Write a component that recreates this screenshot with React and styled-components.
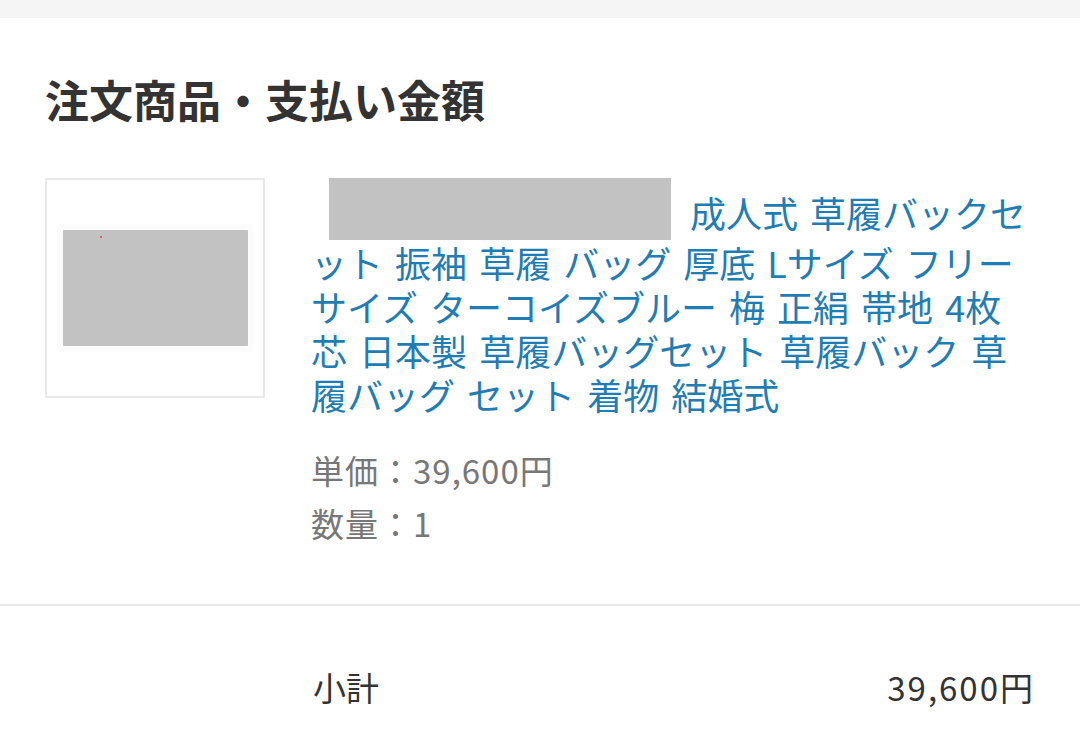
import React from "react";
import styled, { createGlobalStyle } from "styled-components";

const GlobalStyle = createGlobalStyle`
  html, body {
    margin: 0;
    padding: 0;
    background: #ffffff;
  }
  body {
    font-family: "Noto Sans CJK JP", "Noto Sans", sans-serif;
    color: #333333;
  }
`;

const Page = styled.div`
  width: 1080px;
  min-height: 743px;
  background: #ffffff;
  overflow: hidden;
`;

const TopBand = styled.div`
  height: 18px;
  background: #f5f5f5;
`;

const Section = styled.section`
  padding: 55px 47px 54px 45px;
  border-bottom: 2px solid #e8e8e8;
`;

const Title = styled.h2`
  margin: 0;
  font-size: 44px;
  line-height: 53px;
  font-weight: 700;
  color: #333333;
  letter-spacing: 0;
`;

const ProductRow = styled.div`
  display: flex;
  align-items: flex-start;
  gap: 46px;
  margin-top: 52px;
`;

const Thumb = styled.div`
  flex: 0 0 auto;
  width: 220px;
  height: 220px;
  box-sizing: border-box;
  border: 2px solid #e8e8e8;
  display: flex;
  align-items: center;
  justify-content: center;
`;

const ThumbImage = styled.div`
  position: relative;
  width: 185px;
  height: 116px;
  background: #c2c2c2;
  border-radius: 1px;
  box-shadow: 0 0 0 6px #fbfbfb;
`;

const Speck = styled.span`
  position: absolute;
  left: 37px;
  top: 6px;
  width: 2px;
  height: 2px;
  background: #e04040;
  border-radius: 50%;
`;

const Info = styled.div`
  width: 716px;
`;

const ProductLink = styled.a`
  display: block;
  font-size: 36px;
  line-height: 44px;
  color: #1f7db3;
  text-decoration: none;
  word-spacing: 4px;
  line-break: loose;
`;

const Redacted = styled.span`
  display: inline-block;
  width: 342px;
  height: 62px;
  margin: 0 19px 0 18px;
  background: #c2c2c2;
  vertical-align: -12px;
`;

const PriceList = styled.div`
  margin-top: 28px;
`;

const PriceLine = styled.div`
  font-size: 33px;
  line-height: 53px;
  letter-spacing: 1px;
  color: #777777;
`;

const SubtotalRow = styled.div`
  display: flex;
  justify-content: space-between;
  align-items: center;
  padding: 59px 47px 0 313px;
  font-size: 33px;
  line-height: 44px;
  color: #333333;
`;

const SubtotalLabel = styled.span`
  font-weight: 400;
`;

const SubtotalValue = styled.span`
  font-weight: 400;
  letter-spacing: 2px;
  margin-right: -2px;
`;

export default function App() {
  return (
    <Page>
      <GlobalStyle />
      <TopBand />
      <Section>
        <Title>注文商品・支払い金額</Title>
        <ProductRow>
          <Thumb>
            <ThumbImage>
              <Speck />
            </ThumbImage>
          </Thumb>
          <Info>
            <ProductLink href="#">
              <Redacted />
              成人式 草履バックセット 振袖 草履 バッグ 厚底 Lサイズ フリーサイズ ターコイズブルー 梅 正絹 帯地 4枚芯 日本製 草履バッグセット 草履バック 草履バッグ セット 着物 結婚式
            </ProductLink>
            <PriceList>
              <PriceLine>単価：39,600円</PriceLine>
              <PriceLine>数量：1</PriceLine>
            </PriceList>
          </Info>
        </ProductRow>
      </Section>
      <SubtotalRow>
        <SubtotalLabel>小計</SubtotalLabel>
        <SubtotalValue>39,600円</SubtotalValue>
      </SubtotalRow>
    </Page>
  );
}
